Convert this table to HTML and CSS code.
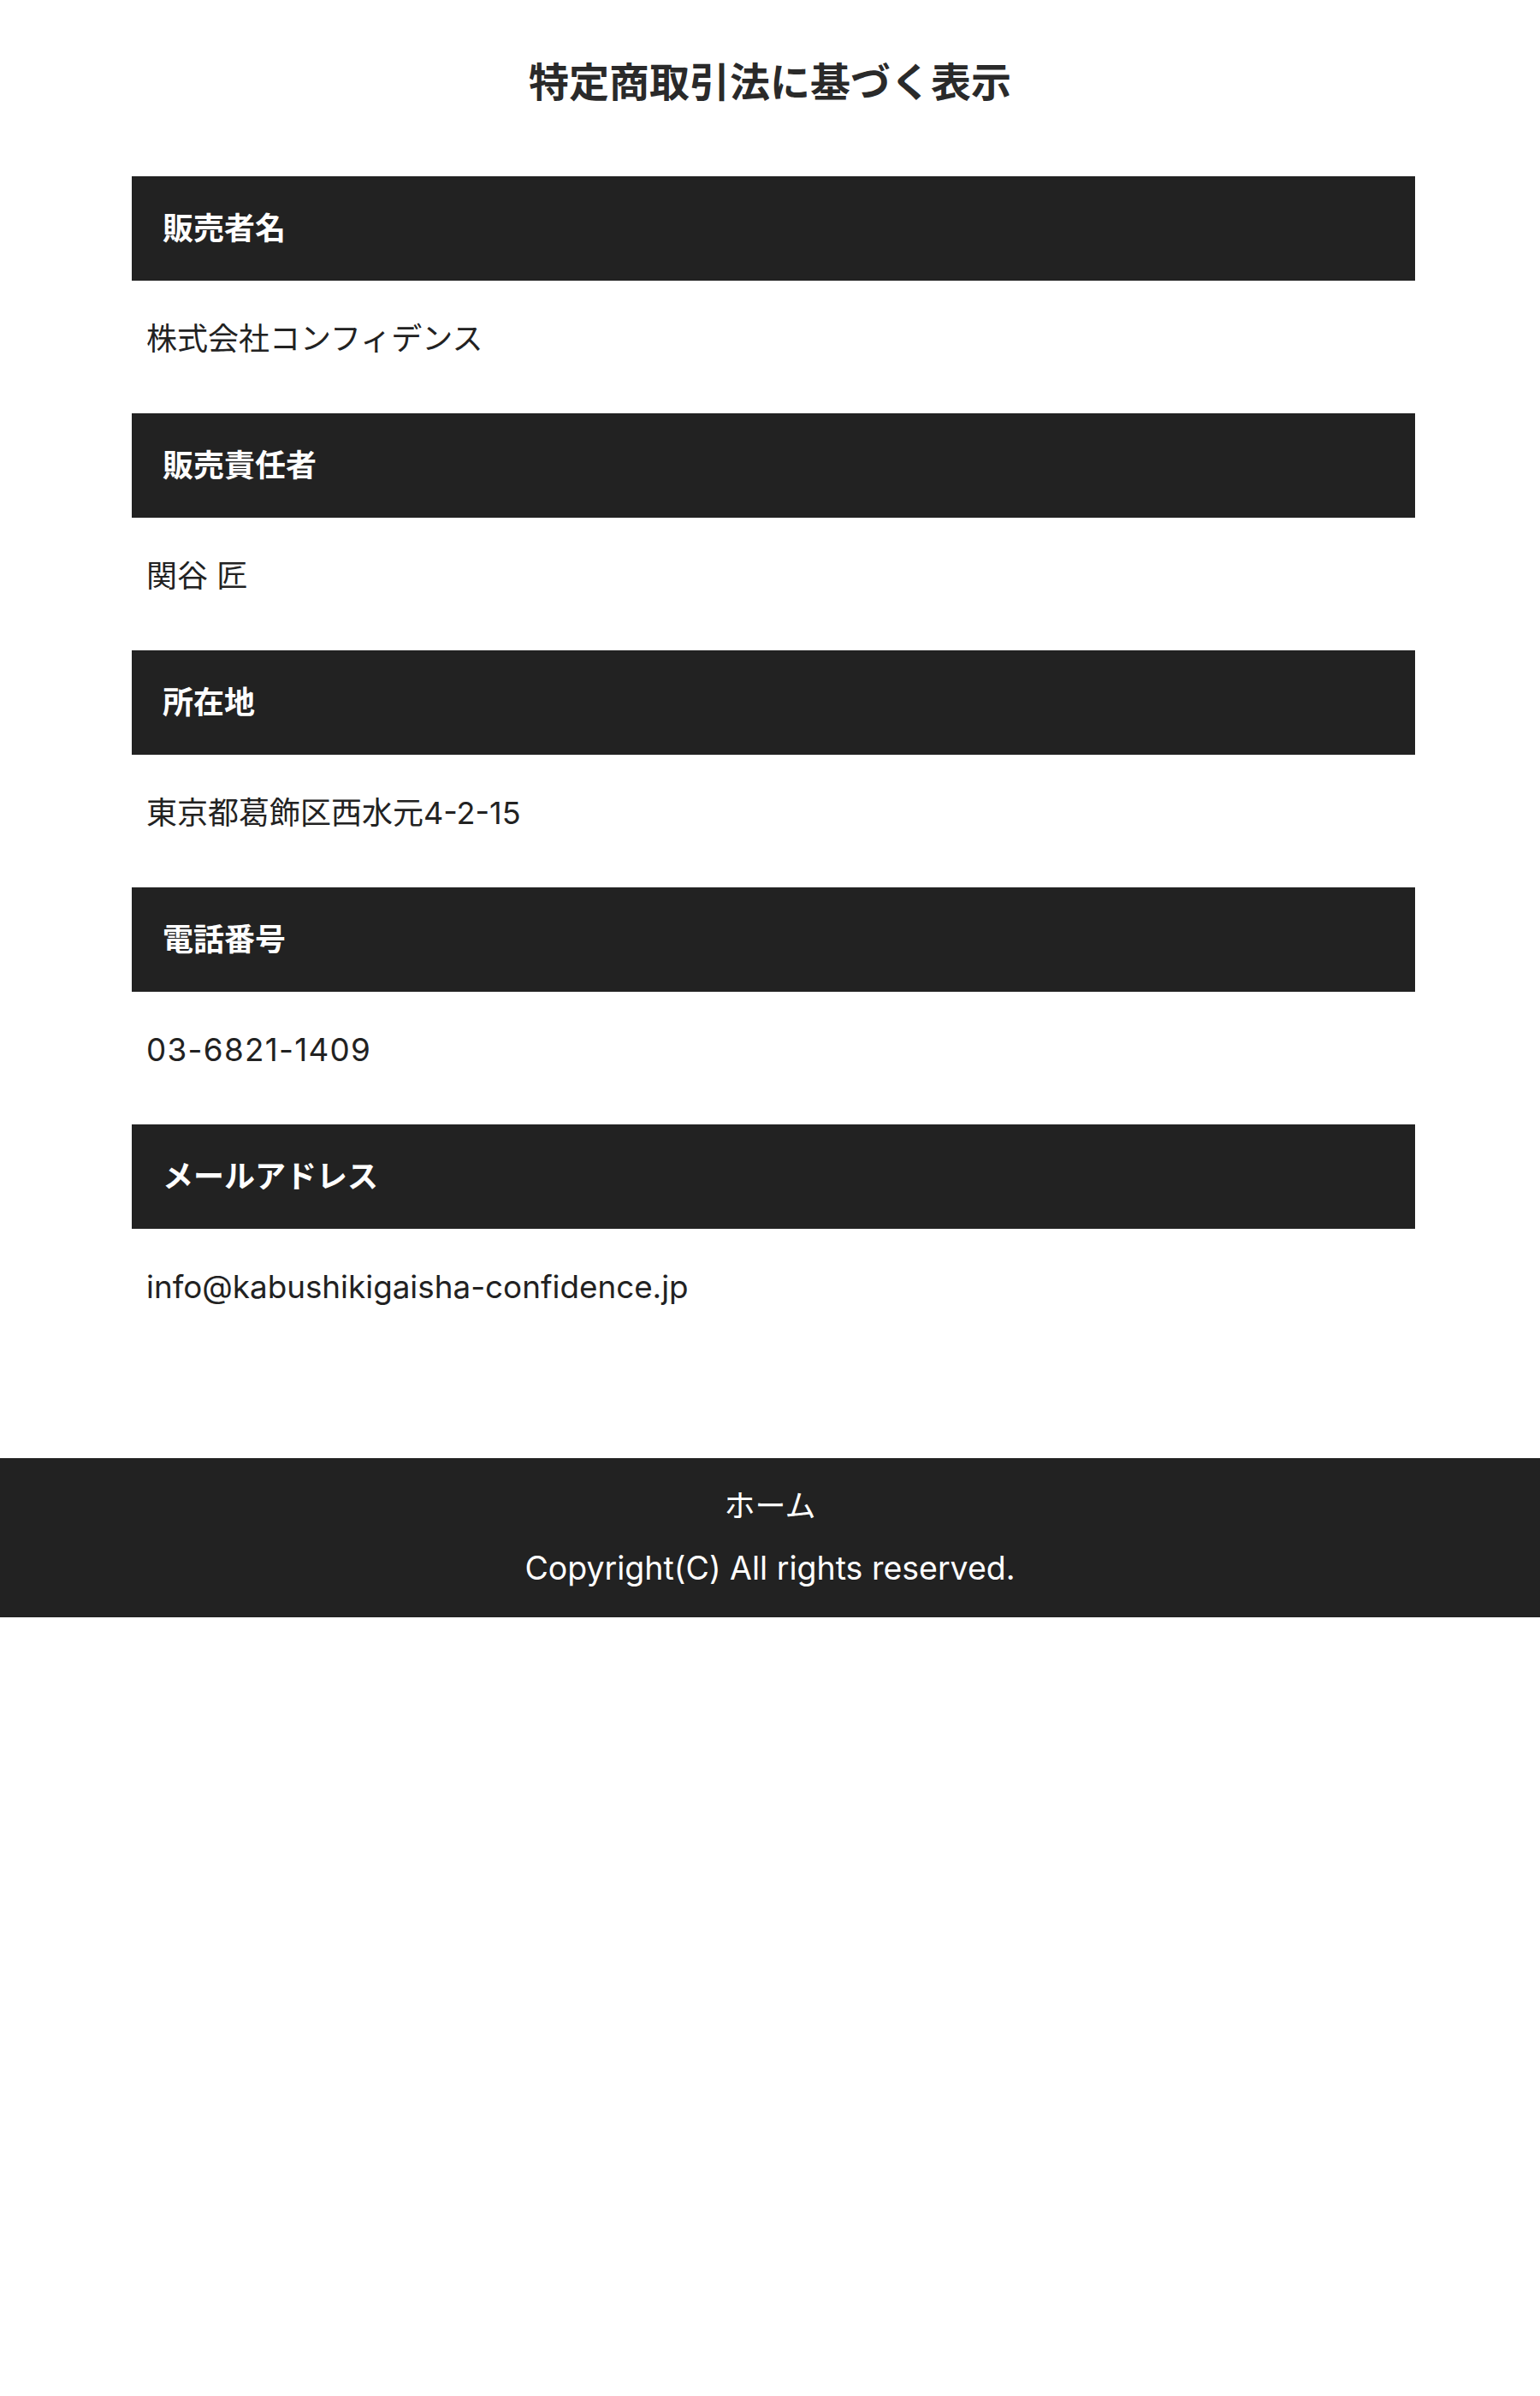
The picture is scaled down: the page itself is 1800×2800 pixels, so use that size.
FILE: index.html
```html
<!DOCTYPE html>
<html lang="ja">
<head>
<meta charset="utf-8">
<title>特定商取引法に基づく表示</title>
<link rel="stylesheet" href="styles.css">
</head>
<body>
<h1 class="page-title">特定商取引法に基づく表示</h1>
<main class="law">
  <dl class="law-list">
    <dt class="law-head">販売者名</dt>
    <dd class="law-body">株式会社コンフィデンス</dd>
    <dt class="law-head">販売責任者</dt>
    <dd class="law-body">関谷 匠</dd>
    <dt class="law-head">所在地</dt>
    <dd class="law-body">東京都葛飾区西水元4-2-15</dd>
    <dt class="law-head">電話番号</dt>
    <dd class="law-body law-body--latin law-body--tel">03-6821-1409</dd>
    <dt class="law-head">メールアドレス</dt>
    <dd class="law-body law-body--latin">info@kabushikigaisha-confidence.jp</dd>
  </dl>
</main>
<footer class="site-footer">
  <a class="footer-link" href="#">ホーム</a>
  <p class="copyright">Copyright(C) All rights reserved.</p>
</footer>
</body>
</html>
```

FILE: styles.css
```css
html, body {
  margin: 0;
  padding: 0;
  background: #ffffff;
}

body {
  font-family: Inter, "Noto Sans CJK JP", sans-serif;
  color: #222222;
}

.page-title {
  margin: 0 0 76px;
  padding-top: 55px;
  font-family: "Noto Sans CJK JP", sans-serif;
  font-size: 47px;
  line-height: 75px;
  font-weight: 700;
  text-align: center;
  color: #2a2a2a;
}

.law {
  width: 1500px;
  margin: 0 0 113px 154px;
}

.law-list {
  margin: 0;
}

.law-head {
  display: flex;
  align-items: center;
  box-sizing: border-box;
  height: 122px;
  padding: 0 0 6px 36px;
  background: #222222;
  color: #ffffff;
  font-family: "Noto Sans CJK JP", sans-serif;
  font-size: 36px;
  font-weight: 700;
}

.law-body {
  margin: 0;
  padding: 41px 0 60px 17px;
  font-size: 36px;
  line-height: 54px;
  color: #222222;
}

.law-body--latin {
  font-size: 36.8px;
}

.law-body--tel {
  letter-spacing: 1.3px;
}

.site-footer {
  background: #222222;
  color: #ffffff;
  text-align: center;
  padding: 29px 0 30px;
  font-size: 36px;
  line-height: 54px;
}

.footer-link {
  display: block;
  color: #ffffff;
  text-decoration: none;
}

.copyright {
  margin: 19px 0 0;
  font-size: 37.5px;
}
```
